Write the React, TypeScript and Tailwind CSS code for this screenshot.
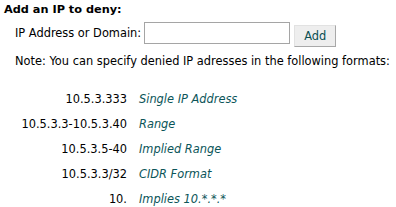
import React from "react";

const rows = [
  ["10.5.3.333", "Single IP Address"],
  ["10.5.3.3-10.5.3.40", "Range"],
  ["10.5.3.5-40", "Implied Range"],
  ["10.5.3.3/32", "CIDR Format"],
  ["10.", "Implies 10.*.*.*"],
];

export default function App() {
  return (
    <div className="w-[396px] h-[207px] bg-white text-black text-[11.4px] leading-none" style={{ fontFamily: '"DejaVu Sans", Verdana, sans-serif' }}>
      <div className="pl-[4px] pt-[4px] font-bold text-[11.3px]">Add an IP to deny:</div>
      <div className="flex items-start pl-[15px] mt-[7px]">
        <span className="mt-[6px]">IP Address or Domain:</span>
        <div className="ml-[3px] w-[146px] h-[22px] border border-[#a5a5a5] bg-white" />
        <button className="ml-[4px] mt-[3px] w-[42px] h-[22px] bg-[#eeeeee] border border-[#e2e2e2] border-r-[#a8a8a8] border-b-[#a8a8a8] text-[#0b4f52] text-[11.4px]">Add</button>
      </div>
      <div className="pl-[15px] mt-[9px]">Note: You can specify denied IP adresses in the following formats:</div>
      <div className="mt-[19px] grid grid-cols-[127px_1fr]">
        {rows.map(([ip, d]) => (
          <React.Fragment key={ip}>
            <div className="text-right h-[25px] flex items-center justify-end">{ip}</div>
            <div className="pl-[12px] h-[25px] flex items-center italic text-[#0b5559]">{d}</div>
          </React.Fragment>
        ))}
      </div>
    </div>
  );
}
